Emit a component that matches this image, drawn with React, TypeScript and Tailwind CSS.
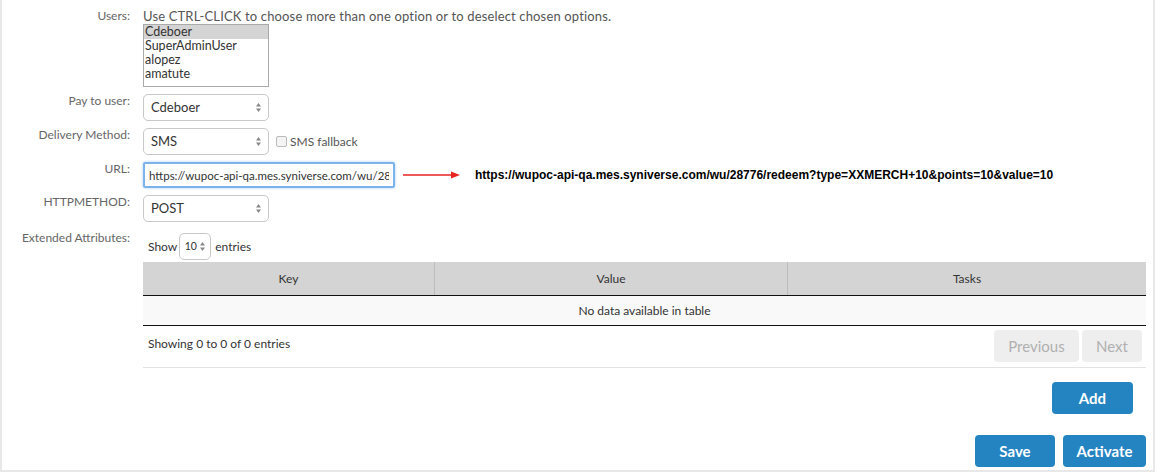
import React from "react";

const ui = { fontFamily: "Lato, 'Open Sans', sans-serif" };

function Arrows() {
  return (
    <svg width="7" height="11" viewBox="0 0 7 11" className="shrink-0">
      <path d="M3.5 1 L6 4.5 L1 4.5 Z" fill="#888" />
      <path d="M3.5 10 L6 6.5 L1 6.5 Z" fill="#888" />
    </svg>
  );
}

function Select({ value, width = "w-[126px]" }: { value: string; width?: string }) {
  return (
    <div
      className={`${width} h-[27px] flex items-center justify-between pl-[7px] pr-[6px] rounded-[5px] border border-[#c8c8c8] bg-white text-[13px] text-[#333]`}
    >
      <span>{value}</span>
      <Arrows />
    </div>
  );
}

function Row({ label, children, className = "" }: { label: string; children: React.ReactNode; className?: string }) {
  return (
    <div className={`flex items-start ${className}`}>
      <div className="w-[128px] shrink-0 text-right text-[12px] leading-[14px] text-[#666]">{label}</div>
      <div className="ml-[13px] flex-1">{children}</div>
    </div>
  );
}

export default function App() {
  const users = ["Cdeboer", "SuperAdminUser", "alopez", "amatute"];

  return (
    <div style={ui} className="w-[1155px] h-[472px] border-x-2 border-b-2 border-[#e8e8e8] bg-white pt-[9px] pr-[7px]">
      <Row label="Users:">
        <div className="text-[13px] leading-[14px] tracking-[0.15px] text-[#555]">
          Use CTRL-CLICK to choose more than one option or to deselect chosen options.
        </div>
        <div className="mt-px w-[126px] h-[63px] border border-[#aaa] bg-white text-[12.5px] leading-[14px] text-[#333]">
          {users.map((u, i) => (
            <div key={u} className={`px-[1px] ${i === 0 ? "bg-[#d4d4d4]" : ""}`}>
              {u}
            </div>
          ))}
        </div>
      </Row>

      <Row label="Pay to user:" className="mt-[7px]">
        <Select value="Cdeboer" />
      </Row>

      <Row label="Delivery Method:" className="mt-[7px]">
        <div className="flex items-center">
          <Select value="SMS" />
          <div className="ml-[7px] w-[11px] h-[11px] rounded-[2px] border border-[#bbb] bg-[#f4f4f4]" />
          <span className="ml-[3px] text-[12px] text-[#555]">SMS fallback</span>
        </div>
      </Row>

      <Row label="URL:" className="mt-[7px]">
        <div className="flex items-center">
          <input
            readOnly
            value="https://wupoc-api-qa.mes.syniverse.com/wu/28776/redeem?type=XXMERCH+10&points=10&value=10"
            style={ui}
            className="w-[252px] h-[26px] px-[4px] rounded-[2px] border-2 border-[#7cb3ec] text-[11.5px] text-[#333] outline-none shadow-[0_0_3px_#a6cdf5]"
          />
          <svg width="60" height="10" viewBox="0 0 60 10" className="ml-[8px] shrink-0">
            <line x1="0" y1="5" x2="50" y2="5" stroke="#e8231f" strokeWidth="1.5" />
            <path d="M48 1.5 L57 5 L48 8.5 Z" fill="#e8231f" />
          </svg>
          <span
            className="ml-[12px] text-[12px] font-bold text-black whitespace-nowrap"
            style={{ fontFamily: "'Liberation Sans', Arial, sans-serif" }}
          >
            https://wupoc-api-qa.mes.syniverse.com/wu/28776/redeem?type=XXMERCH+10&amp;points=10&amp;value=10
          </span>
        </div>
      </Row>

      <Row label="HTTPMETHOD:" className="mt-[7px]">
        <Select value="POST" />
      </Row>

      <Row label="Extended Attributes:" className="mt-[9px]">
        <div className="mt-[2px] flex items-center text-[12px] text-[#333]">
          <span className="ml-[5px]">Show</span>
          <div className="ml-[2px] w-[32px] h-[27px] flex items-center justify-center gap-[2px] rounded-[5px] border border-[#c8c8c8] text-[10.5px]">
            <span>10</span>
            <Arrows />
          </div>
          <span className="ml-[4px]">entries</span>
        </div>

        <div className="mt-[2px] w-[1003px]">
          <div className="grid grid-cols-[292px_353px_1fr] h-[34px] bg-[#d4d4d4] border-b border-[#111] text-[12px] text-[#333]">
            <div className="flex items-center justify-center border-r border-[#bdbdbd]">Key</div>
            <div className="flex items-center justify-center border-r border-[#bdbdbd]">Value</div>
            <div className="flex items-center justify-center">Tasks</div>
          </div>
          <div className="h-[30px] bg-[#f9f9f9] border-b border-[#111] flex items-center justify-center text-[12px] text-[#333]">
            No data available in table
          </div>
          <div className="h-[42px] flex items-start justify-between border-b border-[#e2e2e2]">
            <span className="ml-[5px] mt-[11px] text-[12px] leading-[14px] text-[#333]">Showing 0 to 0 of 0 entries</span>
            <div className="flex gap-[3px] mr-[4px] mt-[4px]">
              <button className="w-[85px] h-[32px] rounded-[4px] bg-[#eeeeee] text-[15px] text-[#b0b0b0]">Previous</button>
              <button className="w-[60px] h-[32px] rounded-[4px] bg-[#eeeeee] text-[15px] text-[#b0b0b0]">Next</button>
            </div>
          </div>
        </div>

        <div className="w-[1003px] flex justify-end pr-[13px] mt-[14px]">
          <button className="w-[81px] h-[32px] rounded-[4px] bg-[#2484c2] text-[15px] font-bold text-white">Add</button>
        </div>
        <div className="w-[1003px] flex justify-end gap-[8px] mt-[21px]">
          <button className="w-[80px] h-[32px] rounded-[4px] bg-[#2484c2] text-[15px] font-bold text-white">Save</button>
          <button className="w-[83px] h-[32px] rounded-[4px] bg-[#2484c2] text-[15px] font-bold text-white">Activate</button>
        </div>
      </Row>
    </div>
  );
}
